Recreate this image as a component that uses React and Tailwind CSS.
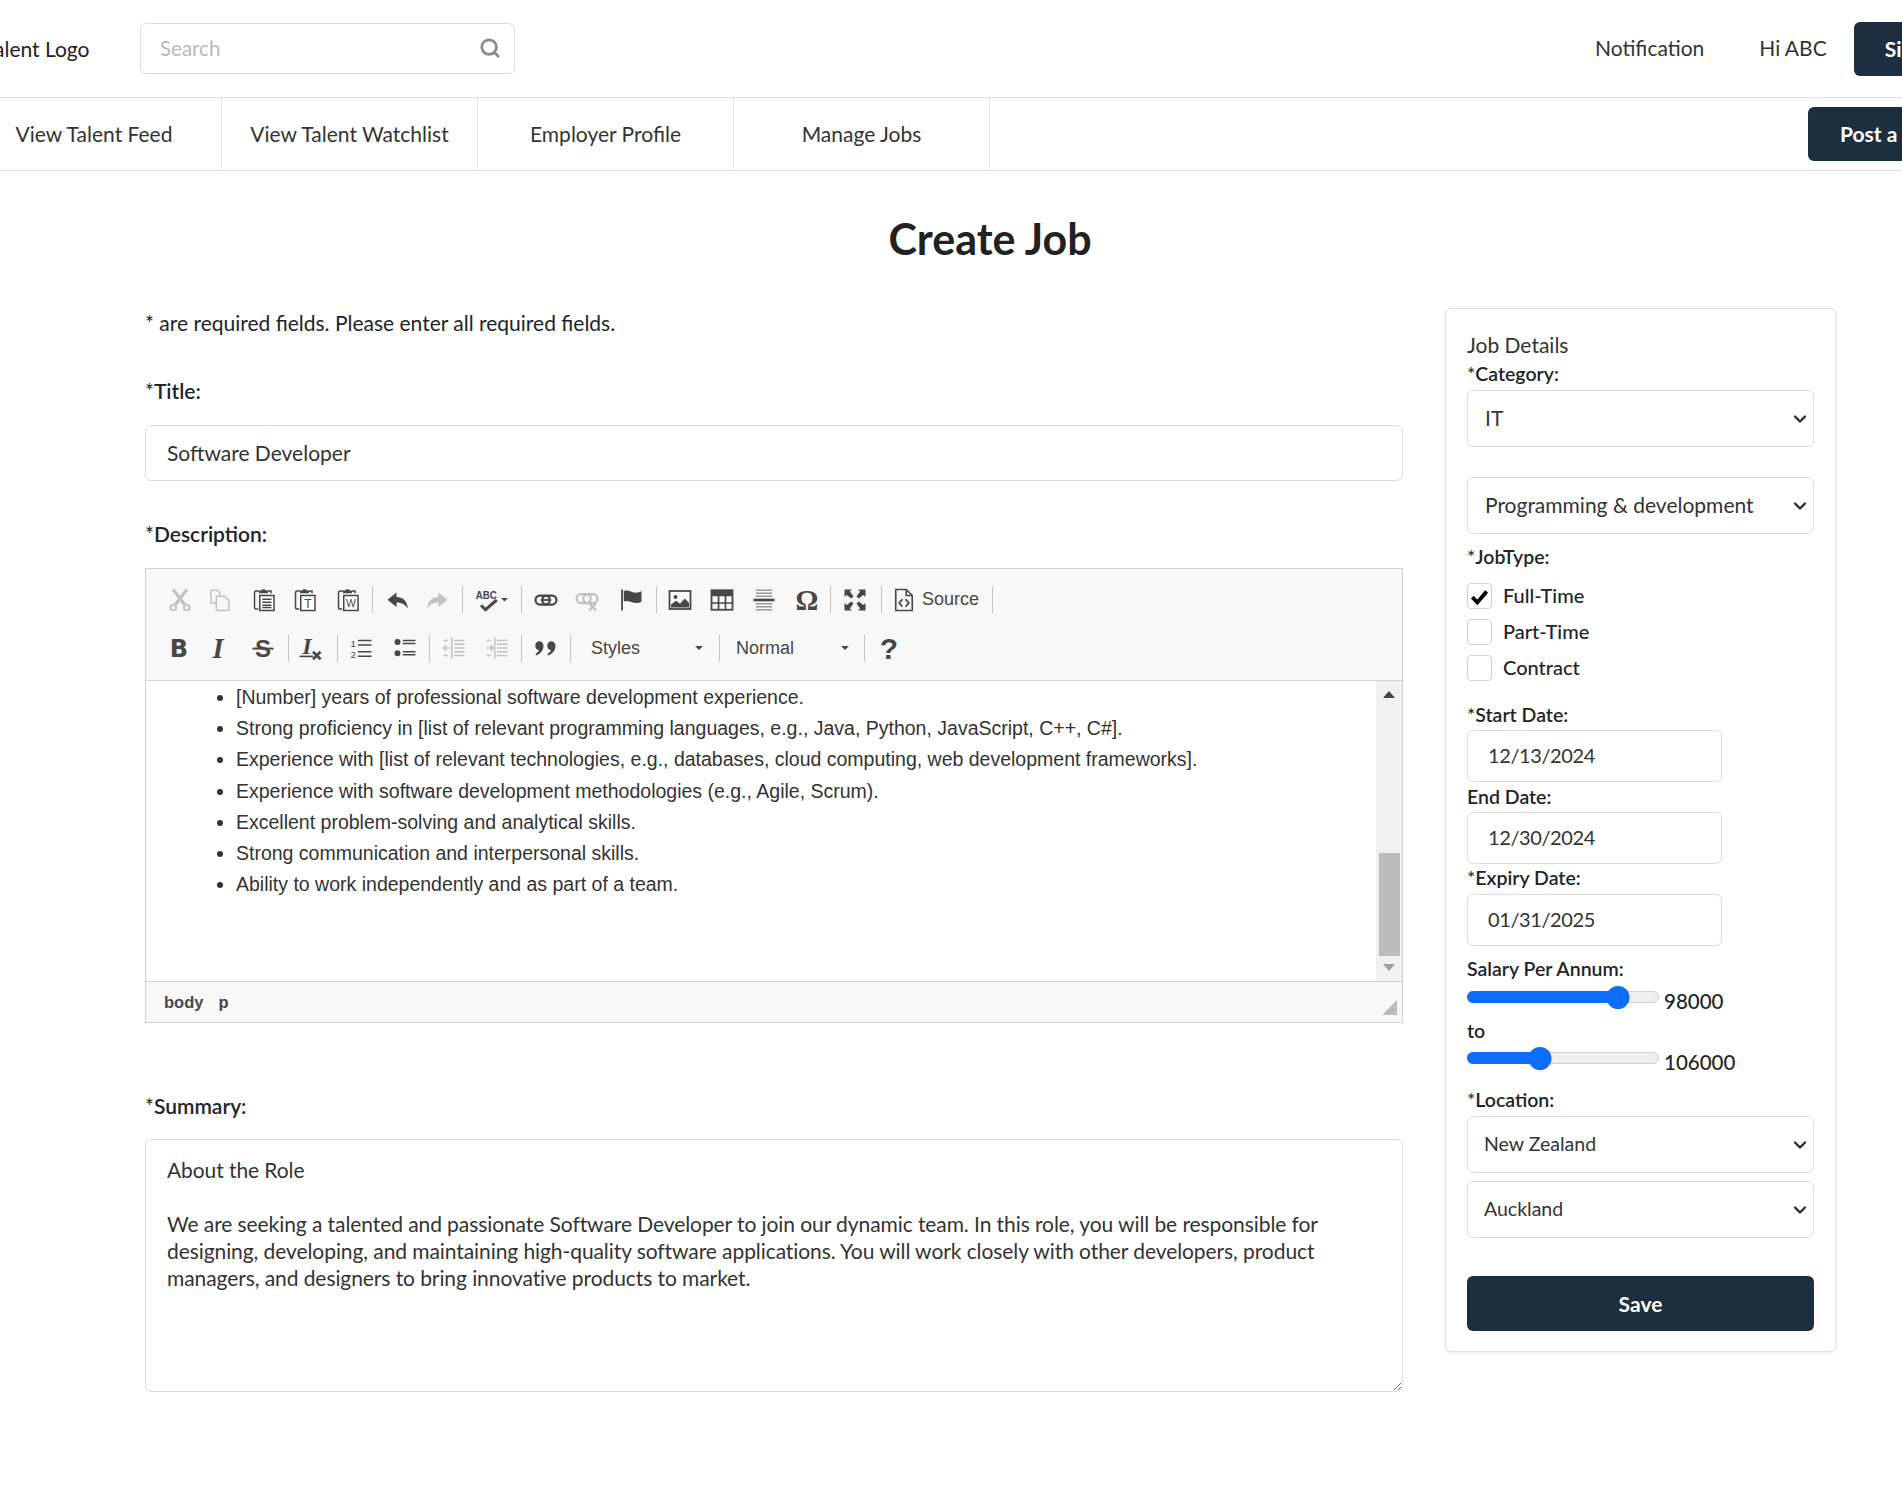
import React from "react";
import { Search, ChevronDown } from "lucide-react";

const ink = "#474747";

const Svg = ({ children, off }) => (
  <svg viewBox="0 0 16 16" width="24" height="24" className={off ? "opacity-30" : ""}>
    {children}
  </svg>
);

const Clip = ({ children }) => (
  <>
    <path d="M4 2H2.2C1.5 2 1 2.5 1 3.2V12.8C1 13.5 1.5 14 2.2 14H3.5" fill="none" stroke={ink} strokeWidth="1" />
    <path d="M10 2H12V3.5" fill="none" stroke={ink} strokeWidth="1" />
    <path d="M4 3.5V1.6L5.5 1.6C5.7.6 8.3.6 8.5 1.6L10 1.6V3.5Z" fill={ink} />
    <rect x="4.5" y="5" width="9.5" height="10" fill="#fff" stroke={ink} strokeWidth="1" />
    {children}
  </>
);

const Icons = {
  cut: (
    <Svg off>
      <path d="M3.5 1L11 11M12.5 1L5 11" stroke={ink} strokeWidth="2.2" fill="none" />
      <circle cx="3.5" cy="13" r="1.9" fill="none" stroke={ink} strokeWidth="1.3" />
      <circle cx="12.5" cy="13" r="1.9" fill="none" stroke={ink} strokeWidth="1.3" />
    </Svg>
  ),
  copy: (
    <Svg off>
      <path d="M6 10H2V1.5H6L8 3.5V5" fill="none" stroke={ink} />
      <path d="M5.5 5.5H11L14 8.5V15H5.5Z" fill="none" stroke={ink} />
    </Svg>
  ),
  paste: (
    <Svg>
      <Clip>
        <path d="M6.2 7.5H12.3M6.2 9.5H12.3M6.2 11.5H12.3M6.2 13H12.3" stroke={ink} strokeWidth="1" />
      </Clip>
    </Svg>
  ),
  pasteText: (
    <Svg>
      <Clip>
        <text x="9.25" y="13" fontSize="8" fontFamily="Liberation Sans" textAnchor="middle" fill={ink}>T</text>
      </Clip>
    </Svg>
  ),
  pasteWord: (
    <Svg>
      <Clip>
        <text x="9.25" y="12.6" fontSize="7" fontFamily="Liberation Sans" textAnchor="middle" fill={ink}>W</text>
      </Clip>
    </Svg>
  ),
  undo: (
    <Svg>
      <path d="M7 3L1 7.8L7 12.6V9.6C10 9.6 12.5 10.6 14.5 13.6C14.2 9 11.5 6 7 6Z" fill={ink} />
    </Svg>
  ),
  redo: (
    <Svg off>
      <path d="M9 3L15 7.8L9 12.6V9.6C6 9.6 3.5 10.6 1.5 13.6C1.8 9 4.5 6 9 6Z" fill={ink} />
    </Svg>
  ),
  spell: (
    <svg viewBox="0 0 36 24" width="36" height="24">
      <svg x="0" y="0" viewBox="0 0 16 16" width="24" height="24">
        <text x="0.5" y="7.5" fontSize="7.5" fontWeight="700" fontFamily="Liberation Sans" fill={ink} textLength="14" lengthAdjust="spacingAndGlyphs">ABC</text>
        <path d="M4 11.5L7 14.5L14.5 8" fill="none" stroke={ink} strokeWidth="2" />
      </svg>
      <path d="M26 10H33L29.5 13.5Z" fill={ink} />
    </svg>
  ),
  link: (
    <Svg>
      <rect x="1" y="5" width="9.5" height="6" rx="3" fill="none" stroke={ink} strokeWidth="1.5" />
      <rect x="5.5" y="5" width="9.5" height="6" rx="3" fill="none" stroke={ink} strokeWidth="1.5" />
      <path d="M4.5 8H11.5" stroke={ink} strokeWidth="1.2" />
    </Svg>
  ),
  unlink: (
    <Svg off>
      <rect x="1" y="4" width="9.5" height="6" rx="3" fill="none" stroke={ink} strokeWidth="1.5" />
      <rect x="5.5" y="4" width="9.5" height="6" rx="3" fill="none" stroke={ink} strokeWidth="1.5" />
      <path d="M9.5 10L14 15M14 10L9.5 15" stroke={ink} strokeWidth="1.6" />
    </Svg>
  ),
  anchor: (
    <Svg>
      <path d="M2 1V15" stroke={ink} strokeWidth="1.2" />
      <path d="M3.2 2C6 1 7.5 2.4 10 3C12 3.4 13.5 2.8 15 2V9C13.5 10 12 10.2 10 9.8C7.5 9.2 6 8 3.2 9Z" fill={ink} />
    </Svg>
  ),
  image: (
    <Svg>
      <rect x="1" y="2" width="14" height="12" fill="none" stroke={ink} strokeWidth="1.2" />
      <circle cx="5" cy="6" r="1.3" fill={ink} />
      <path d="M2 13V11L5.5 8.5L8 10.5L11.2 7L14 10V13Z" fill={ink} />
    </Svg>
  ),
  table: (
    <Svg>
      <rect x="1" y="1.5" width="14" height="13" fill="none" stroke={ink} strokeWidth="1.2" />
      <rect x="1" y="1.5" width="14" height="4" fill={ink} />
      <path d="M1 10H15M5.7 5V14.5M10.3 5V14.5" stroke={ink} strokeWidth="1.1" />
    </Svg>
  ),
  hr: (
    <Svg>
      <path d="M2.5 1.5H13.5M2.5 3.5H13.5M2.5 5.5H13.5M2.5 10.5H13.5M2.5 12.5H13.5M2.5 14.5H13.5" stroke="#9a9a9a" strokeWidth="1" />
      <path d="M1 8H15" stroke={ink} strokeWidth="1.8" />
    </Svg>
  ),
  omega: (
    <Svg>
      <text x="8" y="14.6" fontSize="19" fontFamily="Liberation Serif" fontWeight="700" textAnchor="middle" fill={ink}>Ω</text>
    </Svg>
  ),
  max: (
    <Svg>
      <path d="M1 1H6L4.6 2.4L7 5.6L5.6 7L2.4 4.6L1 6ZM15 1V6L13.6 4.6L10.4 7L9 5.6L11.4 2.4L10 1ZM1 15V10L2.4 11.4L5.6 9L7 10.4L4.6 13.6L6 15ZM15 15H10L11.4 13.6L9 10.4L10.4 9L13.6 11.4L15 10Z" fill={ink} />
    </Svg>
  ),
  source: (
    <Svg>
      <path d="M2.5 1H9.5L13.5 5V15H2.5Z" fill="none" stroke={ink} strokeWidth="1.1" />
      <path d="M9.5 1V5H13.5" fill="none" stroke={ink} strokeWidth="1" />
      <path d="M7 7.5L4.8 10L7 12.5M9 7.5L11.2 10L9 12.5" fill="none" stroke={ink} strokeWidth="1.2" />
    </Svg>
  ),
  bold: (
    <Svg>
      <text x="8" y="14" fontSize="16" fontWeight="700" fontFamily="DejaVu Sans" textAnchor="middle" fill={ink}>B</text>
    </Svg>
  ),
  italic: (
    <Svg>
      <text x="8" y="14.5" fontSize="19" fontWeight="700" fontStyle="italic" fontFamily="Liberation Serif" textAnchor="middle" fill={ink}>I</text>
    </Svg>
  ),
  strike: (
    <Svg>
      <text x="8" y="14" fontSize="16" fontWeight="700" fontFamily="Liberation Sans" textAnchor="middle" fill={ink}>S</text>
      <path d="M1 8.4H15" stroke={ink} strokeWidth="1.3" />
    </Svg>
  ),
  clear: (
    <Svg>
      <text x="6" y="12" fontSize="16" fontWeight="700" fontStyle="italic" fontFamily="Liberation Serif" textAnchor="middle" fill={ink}>I</text>
      <path d="M1 13.6H10" stroke={ink} strokeWidth="1.1" />
      <path d="M10 10.5L15 15.5M15 10.5L10 15.5" stroke={ink} strokeWidth="1.8" />
    </Svg>
  ),
  ol: (
    <Svg>
      <text x="1" y="7" fontSize="6.5" fontFamily="Liberation Sans" fill={ink}>1</text>
      <text x="1" y="14.5" fontSize="6.5" fontFamily="Liberation Sans" fill={ink}>2</text>
      <path d="M6 3H15M6 6H15M6 10.5H15M6 13.5H15" stroke={ink} strokeWidth="1.1" />
    </Svg>
  ),
  ul: (
    <Svg>
      <circle cx="3" cy="4" r="2" fill={ink} />
      <circle cx="3" cy="11.5" r="2" fill={ink} />
      <path d="M6.5 3H15M6.5 5H15M6.5 10.5H15M6.5 12.5H15" stroke={ink} strokeWidth="1.1" />
    </Svg>
  ),
  outdent: (
    <Svg off>
      <path d="M6.5 1V15" stroke={ink} strokeWidth="1" />
      <path d="M8 3H15M8 5.5H15M8 8H15M8 10.5H15M8 13H15" stroke={ink} strokeWidth="1" />
      <path d="M5.5 8H1M3 6L1 8L3 10M1 3H4M1 13H4" fill="none" stroke={ink} strokeWidth="1" />
    </Svg>
  ),
  indent: (
    <Svg off>
      <path d="M6.5 1V15" stroke={ink} strokeWidth="1" />
      <path d="M8 3H15M8 5.5H15M8 8H15M8 10.5H15M8 13H15" stroke={ink} strokeWidth="1" />
      <path d="M1 8H5.5M3.5 6L5.5 8L3.5 10M1 3H4M1 13H4" fill="none" stroke={ink} strokeWidth="1" />
    </Svg>
  ),
  quote: (
    <Svg>
      <path d="M4 3.5A3 3 0 0 1 7 6.5C7 9.5 5 12 2 13L1.6 12C3 11.3 3.8 10.4 4 9.4A3 3 0 0 1 4 3.5Z" fill={ink} />
      <path d="M12 3.5A3 3 0 0 1 15 6.5C15 9.5 13 12 10 13L9.6 12C11 11.3 11.8 10.4 12 9.4A3 3 0 0 1 12 3.5Z" fill={ink} />
    </Svg>
  ),
  help: (
    <Svg>
      <text x="8" y="15" fontSize="20" fontWeight="700" fontFamily="Liberation Sans" textAnchor="middle" fill={ink}>?</text>
    </Svg>
  ),
};

const Slot = ({ name, className = "" }) => (
  <span className={`flex w-7 shrink-0 items-center justify-center ${className}`}>{Icons[name]}</span>
);
const Sep = ({ className = "" }) => <span className={`h-[27px] w-px shrink-0 bg-[#c4c4c4] ${className}`} />;
const Caret = () => (
  <svg viewBox="0 0 10 6" width="10" height="6" className="shrink-0">
    <path d="M1 1H9L5 5Z" fill={ink} />
  </svg>
);

const MainLabel = ({ children, className = "" }) => (
  <label className={`block text-[21px] leading-[24px] font-semibold text-[#212529] ${className}`}>{children}</label>
);
const Field = ({ children, className = "" }) => (
  <label className={`block text-[19.5px] leading-[24px] font-semibold text-[#212529] ${className}`}>{children}</label>
);
const Star = () => <span className="font-normal">*</span>;

const Select = ({ value, className = "", textClass = "text-[21px] pl-[17px]" }) => (
  <div className={`relative h-[57px] w-[347px] ${className}`}>
    <select
      defaultValue={value}
      className={`h-full w-full appearance-none rounded-[6px] border border-[#dcdcdc] bg-white pb-[1px] text-[#333] outline-none ${textClass}`}
    >
      <option>{value}</option>
    </select>
    <ChevronDown size={20} strokeWidth={2.8} className="pointer-events-none absolute top-[19px] right-[4px] text-[#2b2b2b]" />
  </div>
);

const DateField = ({ value, className = "" }) => (
  <input
    readOnly
    value={value}
    className={`block h-[52px] w-[255px] rounded-[6px] border border-[#dcdcdc] bg-white pb-[2px] pl-[20px] text-[20px] tracking-[-0.4px] text-[#333] outline-none ${className}`}
  />
);

const Check = ({ label, checked }) => (
  <div className="flex h-[26px] items-center">
    <span className="flex h-[26px] w-[25px] items-center justify-center rounded-[4px] border border-[#cfcfcf] bg-white">
      {checked && (
        <svg viewBox="0 0 16 16" width="19" height="19">
          <path d="M2 8.5L6.2 13L14 3.8" fill="none" stroke="#000" strokeWidth="3.2" />
        </svg>
      )}
    </span>
    <span className="ml-[11px] pb-[2px] text-[20px] leading-[24px] font-medium text-[#212529]">{label}</span>
  </div>
);

const Slider = ({ pct, value, className = "" }) => (
  <div className={`flex h-[24px] ${className}`}>
    <div className="relative -mt-[4px] h-[24px] w-[192px] shrink-0">
      <div className="absolute top-[6px] right-0 left-0 h-[12px] rounded-full border border-[#d0d0d0] bg-[#efefef]" />
      <div className="absolute top-[6px] left-0 h-[12px] rounded-full bg-[#0d6efd]" style={{ width: `${pct}%` }} />
      <div className="absolute top-[0.5px] h-[23px] w-[23px] -translate-x-1/2 rounded-full bg-[#0d6efd]" style={{ left: `${pct}%` }} />
    </div>
    <span className="ml-[5px] text-[20.5px] leading-[24px] font-medium text-[#212529]">{value}</span>
  </div>
);

const summary = `About the Role

We are seeking a talented and passionate Software Developer to join our dynamic team. In this role, you will be responsible for designing, developing, and maintaining high-quality software applications. You will work closely with other developers, product managers, and designers to bring innovative products to market.`;

const bullets = [
  "[Number] years of professional software development experience.",
  "Strong proficiency in [list of relevant programming languages, e.g., Java, Python, JavaScript, C++, C#].",
  "Experience with [list of relevant technologies, e.g., databases, cloud computing, web development frameworks].",
  "Experience with software development methodologies (e.g., Agile, Scrum).",
  "Excellent problem-solving and analytical skills.",
  "Strong communication and interpersonal skills.",
  "Ability to work independently and as part of a team.",
];

export default function App() {
  return (
    <div className="h-[1490px] w-[1902px] overflow-hidden bg-white font-['Lato',sans-serif] text-[21px] text-[#212529]">
      <header className="flex h-[98px] items-center border-b border-[#dedede]">
        <span className="-ml-[16px] w-[105px] shrink-0 whitespace-nowrap text-[#222]">Talent Logo</span>
        <div className="relative ml-[51px] h-[51px] w-[375px] shrink-0">
          <input
            placeholder="Search"
            className="h-full w-full rounded-[6px] border border-[#dcdcdc] bg-white pb-[1px] pl-[19px] text-[20.5px] outline-none placeholder:text-[#b9b9b9]"
          />
          <Search size={22} strokeWidth={3} className="absolute top-[14px] right-[14px] text-[#8a8a8a]" />
        </div>
        <span className="ml-[1080px] shrink-0 pb-[2px] text-[#333]">Notification</span>
        <span className="ml-[55px] shrink-0 pb-[2px] text-[#333]">Hi ABC</span>
        <button className="ml-[27px] h-[54px] w-[150px] shrink-0 rounded-[6px] bg-[#1c2e40] pl-[31px] text-left font-bold text-white">
          Sign Out
        </button>
      </header>

      <nav className="flex h-[73px] items-stretch border-b border-[#dedede]">
        <a className="-ml-[33px] flex w-[255px] shrink-0 items-center justify-center border-r border-[#e8e8e8] text-[#333]">View Talent Feed</a>
        <a className="flex w-[256px] shrink-0 items-center justify-center border-r border-[#e8e8e8] text-[#333]">View Talent Watchlist</a>
        <a className="flex w-[256px] shrink-0 items-center justify-center border-r border-[#e8e8e8] text-[#333]">Employer Profile</a>
        <a className="flex w-[256px] shrink-0 items-center justify-center border-r border-[#e8e8e8] text-[#333]">Manage Jobs</a>
        <button className="mt-[9px] ml-[818px] h-[54px] w-[200px] shrink-0 rounded-[6px] bg-[#1c2e40] pl-[32px] text-left font-bold text-white">
          Post a Job
        </button>
      </nav>

      <h1 className="mt-[43px] w-[1980px] text-center text-[43px] leading-[50px] font-bold text-[#222]">Create Job</h1>

      <main className="mt-[44px] flex items-start pl-[145px]">
        <div className="w-[1258px] shrink-0 pt-[3px]">
          <p className="leading-[24px]">* are required fields. Please enter all required fields.</p>

          <MainLabel className="mt-[44px]"><Star />Title:</MainLabel>
          <input
            readOnly
            value="Software Developer"
            className="mt-[22px] block h-[56px] w-full rounded-[6px] border border-[#dcdcdc] bg-white pb-[1px] pl-[21px] text-[21px] text-[#333] outline-none"
          />

          <MainLabel className="mt-[41px]"><Star />Description:</MainLabel>

          <div className="mt-[22px] h-[455px] w-full border border-[#d1d1d1]">
            <div className="h-[112px] border-b border-[#d1d1d1] bg-[#f8f8f8]">
              <div className="flex h-[58px] items-center pt-[3px] pl-[20px]">
                <Slot name="cut" />
                <Slot name="copy" className="ml-[12px]" />
                <Slot name="paste" className="ml-[17px]" />
                <Slot name="pasteText" className="ml-[13px]" />
                <Slot name="pasteWord" className="ml-[15px]" />
                <Sep className="ml-[9px]" />
                <Slot name="undo" className="ml-[11px]" />
                <Slot name="redo" className="ml-[11px]" />
                <Sep className="ml-[11px]" />
                <span className="ml-[12px] flex w-[36px] shrink-0 items-center justify-center">{Icons.spell}</span>
                <Sep className="ml-[10px]" />
                <Slot name="link" className="ml-[10px]" />
                <Slot name="unlink" className="ml-[13px]" />
                <Slot name="anchor" className="ml-[16px]" />
                <Sep className="ml-[11px]" />
                <Slot name="image" className="ml-[9px]" />
                <Slot name="table" className="ml-[14px]" />
                <Slot name="hr" className="ml-[14px]" />
                <Slot name="omega" className="ml-[15px]" />
                <Sep className="ml-[9px]" />
                <Slot name="max" className="ml-[10px]" />
                <Sep className="ml-[12px]" />
                <Slot name="source" className="ml-[8px]" />
                <span className="ml-[4px] font-['Liberation_Sans',sans-serif] text-[18px] text-[#474747]">Source</span>
                <Sep className="ml-[13px]" />
              </div>
              <div className="flex h-[42px] items-center pl-[19px]">
                <Slot name="bold" />
                <Slot name="italic" className="ml-[11px]" />
                <Slot name="strike" className="ml-[17px]" />
                <Sep className="ml-[11px]" />
                <Slot name="clear" className="ml-[7px]" />
                <Sep className="ml-[13px]" />
                <Slot name="ol" className="ml-[9px]" />
                <Slot name="ul" className="ml-[16px]" />
                <Sep className="ml-[10px]" />
                <Slot name="outdent" className="ml-[10px]" />
                <Slot name="indent" className="ml-[15px]" />
                <Sep className="ml-[10px]" />
                <Slot name="quote" className="ml-[9px]" />
                <Sep className="ml-[11px]" />
                <span className="ml-[20px] w-[103px] shrink-0 font-['Liberation_Sans',sans-serif] text-[18px] text-[#474747]">Styles</span>
                <Caret />
                <Sep className="ml-[15px]" />
                <span className="ml-[16px] w-[104px] shrink-0 font-['Liberation_Sans',sans-serif] text-[18px] text-[#474747]">Normal</span>
                <Caret />
                <Sep className="ml-[14px]" />
                <Slot name="help" className="ml-[10px]" />
              </div>
            </div>

            <div className="flex h-[301px] border-b border-[#d1d1d1]">
              <ul className="min-w-0 flex-1 list-disc pt-[1px] pl-[90px] font-['Liberation_Sans',sans-serif] text-[19.5px] leading-[31.2px] text-[#333]">
                {bullets.map((b) => (
                  <li key={b}>{b}</li>
                ))}
              </ul>
              <div className="flex w-[26px] shrink-0 flex-col items-center bg-[#f1f1f1]">
                <svg viewBox="0 0 12 7" width="12" height="7" className="mt-[10px] shrink-0">
                  <path d="M0 7L6 0L12 7Z" fill="#444" />
                </svg>
                <div className="mt-[155px] h-[103px] w-[21px] shrink-0 bg-[#bcbcbc]" />
                <svg viewBox="0 0 12 7" width="12" height="7" className="mt-[8px] shrink-0">
                  <path d="M0 0L6 7L12 0Z" fill="#a0a0a0" />
                </svg>
              </div>
            </div>

            <div className="relative flex h-[40px] items-center bg-[#f8f8f8] pl-[18px] font-['Liberation_Sans',sans-serif] text-[16.5px] font-bold text-[#484848]">
              <span>body</span>
              <span className="ml-[15px]">p</span>
              <svg viewBox="0 0 15 15" width="15" height="15" className="absolute right-[5px] bottom-[7px]">
                <path d="M15 0V15H0Z" fill="#bdbdbd" />
              </svg>
            </div>
          </div>

          <MainLabel className="mt-[71px]"><Star />Summary:</MainLabel>
          <textarea
            readOnly
            defaultValue={summary}
            className="mt-[21px] block h-[253px] w-full rounded-[6px] border border-[#dcdcdc] bg-white px-[21px] pt-[16px] text-[21px] leading-[27px] tracking-[-0.08px] text-[#333] outline-none"
          />
        </div>

        <aside className="ml-[42px] h-[1044px] w-[391px] shrink-0 rounded-[6px] border border-[#e2e2e2] bg-white px-[21px] pt-[24px] shadow-[0_1px_3px_rgba(0,0,0,0.08)]">
          <div className="leading-[24px] text-[#333]">Job Details</div>
          <Field className="mt-[5px]"><Star />Category:</Field>
          <Select value="IT" className="mt-[4px]" />
          <Select value="Programming & development" className="mt-[30px]" />
          <Field className="mt-[11px]"><Star />JobType:</Field>
          <div className="mt-[14px] flex flex-col gap-[10px]">
            <Check label="Full-Time" checked />
            <Check label="Part-Time" />
            <Check label="Contract" />
          </div>
          <Field className="mt-[22px]"><Star />Start Date:</Field>
          <DateField value="12/13/2024" className="mt-[3px]" />
          <Field className="mt-[3px]">End Date:</Field>
          <DateField value="12/30/2024" className="mt-[3px]" />
          <Field className="mt-[2px]"><Star />Expiry Date:</Field>
          <DateField value="01/31/2025" className="mt-[4px]" />
          <Field className="mt-[11px]">Salary Per Annum:</Field>
          <Slider pct={78.5} value="98000" className="mt-[8px]" />
          <Field className="mt-[6px]">to</Field>
          <Slider pct={38} value="106000" className="mt-[7px]" />
          <Field className="mt-[14px]"><Star />Location:</Field>
          <Select value="New Zealand" className="mt-[4px]" textClass="text-[19.5px] pl-[16px]" />
          <Select value="Auckland" className="mt-[8px]" textClass="text-[19.5px] pl-[16px]" />
          <button className="mt-[38px] h-[55px] w-[347px] rounded-[6px] bg-[#1c2e40] text-[21px] font-bold text-white">Save</button>
        </aside>
      </main>
    </div>
  );
}
